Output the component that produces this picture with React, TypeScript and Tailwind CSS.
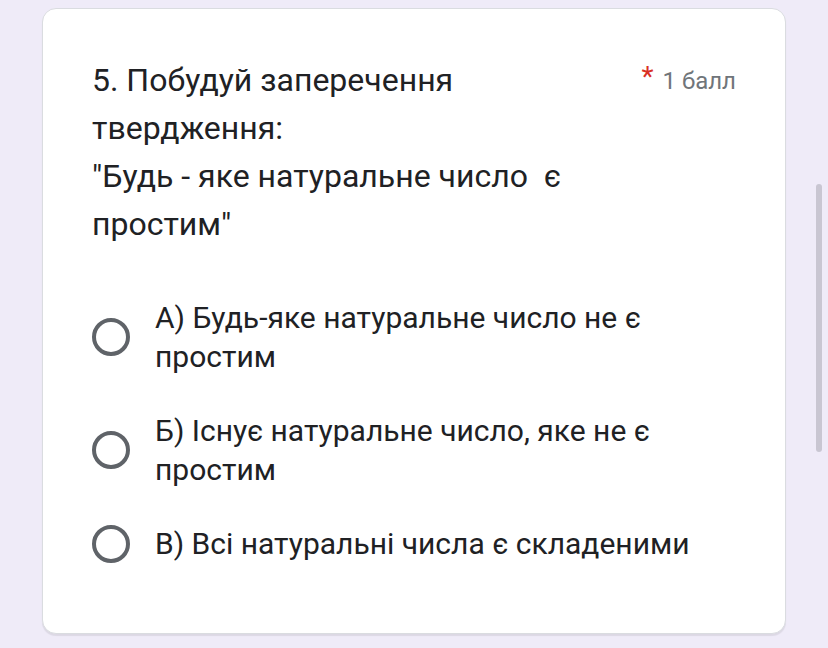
import React from 'react';

const options = [
  ['А) Будь-яке натуральне число не є', 'простим'],
  ['Б) Існує натуральне число, яке не є', 'простим'],
  ['В) Всі натуральні числа є складеними'],
];

const Radio = () => (
  <div className="w-[38px] h-[38px] shrink-0 rounded-full border-[4px] border-[#5f6368]" />
);

export default function App() {
  return (
    <div
      className="relative w-[828px] h-[648px] overflow-hidden bg-[#efebf8] pt-[8px] pl-[42px]"
      style={{ fontFamily: 'Roboto, "Noto Sans", sans-serif' }}
    >
      {/* QUESTION CARD */}
      <div className="w-[744px] h-[626px] bg-white rounded-[14px] border border-[#dadce0] shadow-[0_2px_1px_rgba(0,0,0,0.08)] pt-[47px] px-[49px]">
        <div className="flex justify-between items-start">
          <div className="text-[32px] leading-[48px] text-[#202124]">
            <div>5. Побудуй заперечення</div>
            <div>твердження:</div>
            <div className="whitespace-pre">"Будь - яке натуральне число  є</div>
            <div>простим"</div>
          </div>
          <div className="flex items-start gap-[9px] pt-[6px]">
            <span className="text-[28px] leading-[30px] text-[#d93025]">*</span>
            <span className="text-[24px] leading-[38px] text-[#70757a]">1 балл</span>
          </div>
        </div>

        {/* OPTIONS */}
        <div className="flex flex-col gap-[35px] mt-[50px]">
          {options.map((lines, i) => (
            <div key={i} className="flex items-center gap-[25px]">
              <Radio />
              <div className="text-[30px] leading-[39px] text-[#202124]">
                {lines.map((l, j) => (
                  <div key={j}>{l}</div>
                ))}
              </div>
            </div>
          ))}
        </div>
      </div>

      {/* SCROLLBAR THUMB */}
      <div className="absolute left-[816px] top-[184px] w-[6px] h-[268px] rounded-full bg-[#c9c6d2]" />
    </div>
  );
}
